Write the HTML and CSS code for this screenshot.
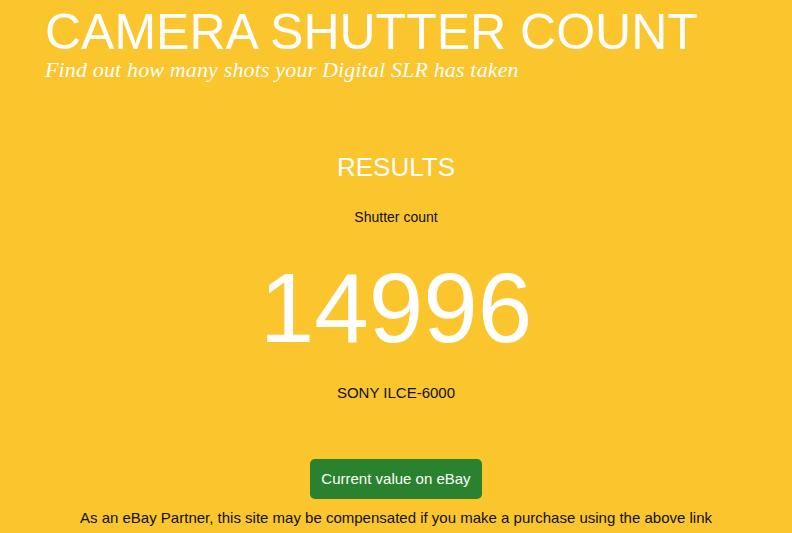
FILE: index.html
```html
<!DOCTYPE html>
<html lang="en">
<head>
  <meta charset="UTF-8" />
  <meta name="viewport" content="width=device-width, initial-scale=1.0"/>
  <title>Camera Shutter Count</title>
  <link rel="stylesheet" href="styles.css">
</head>
<body>
  <header class="site-header">
    <h1>CAMERA SHUTTER COUNT</h1>
    <p class="tagline">Find out how many shots your Digital SLR has taken</p>
  </header>

  <main class="results">
    <h2>RESULTS</h2>
    <p class="label">Shutter count</p>
    <div class="count">14996</div>
    <p class="model">SONY ILCE-6000</p>
    <a class="ebay-btn" href="#">Current value on eBay</a>
    <p class="disclaimer">As an eBay Partner, this site may be compensated if you make a purchase using the above link</p>
  </main>
</body>
</html>
```

FILE: styles.css
```css
body {
  margin: 0;
  background: #fbc52e;
  font-family: "Liberation Sans", Arial, sans-serif;
  color: #111;
}
.site-header {
  padding: 0 0 0 45px;
}
.site-header h1 {
  margin: 0;
  padding-top: 7px;
  font-weight: normal;
  font-size: 50px;
  line-height: 50px;
  color: #fff;
}
.tagline {
  margin: 0;
  padding-top: 1px;
  font-family: "Liberation Serif", Georgia, serif;
  font-style: italic;
  font-size: 22px;
  letter-spacing: 0.15px;
  line-height: 24px;
  color: #fff;
}
.results {
  text-align: center;
  padding-top: 70px;
}
.results h2 {
  margin: 0;
  font-weight: normal;
  font-size: 26px;
  line-height: 30px;
  color: #fff;
}
.label {
  margin: 27px 0 0;
  font-size: 14px;
}
.count {
  margin-top: 28px;
  font-size: 98px;
  line-height: 110px;
  color: #fff;
}
.model {
  margin: 21px 0 0;
  font-size: 15px;
}
.ebay-btn {
  display: inline-block;
  margin-top: 58px;
  padding: 10px 11px;
  background: #2a822e;
  color: #fff;
  font-size: 15px;
  line-height: 20px;
  text-decoration: none;
  border-radius: 5px;
}
.disclaimer {
  margin: 10px 0 0;
  font-size: 15px;
}
```
